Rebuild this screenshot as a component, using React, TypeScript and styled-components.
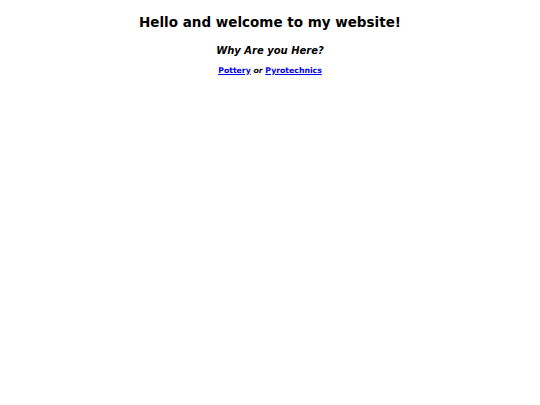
import styled, { createGlobalStyle } from "styled-components";

const GlobalStyle = createGlobalStyle`
  html, body {
    margin: 0;
    padding: 0;
    background: #ffffff;
  }
  body {
    font-family: "DejaVu Sans", "Liberation Sans", sans-serif;
    color: #000000;
  }
`;

const Page = styled.main`
  display: flex;
  flex-direction: column;
  align-items: center;
  padding: 14px 4px 0;
`;

const Title = styled.h1`
  margin: 0;
  font-size: 13.5px;
  line-height: 16px;
  font-weight: 700;
`;

const Question = styled.h3`
  margin: 14.5px 0 0;
  font-size: 10px;
  line-height: 12px;
  font-weight: 700;
  font-style: italic;
`;

const Choices = styled.p`
  margin: 9px 0 0;
  font-size: 7.75px;
  line-height: 10px;
  font-weight: 700;
`;

const Link = styled.a`
  color: #0000ee;
  text-decoration: underline;
`;

const App = () => {
  return (
    <>
      <GlobalStyle />
      <Page>
        <Title>Hello and welcome to my website!</Title>
        <Question>Why Are you Here?</Question>
        <Choices>
          <Link href="#pottery">Pottery</Link> <em>or</em>{" "}
          <Link href="#pyrotechnics">Pyrotechnics</Link>
        </Choices>
      </Page>
    </>
  );
};

export default App;
